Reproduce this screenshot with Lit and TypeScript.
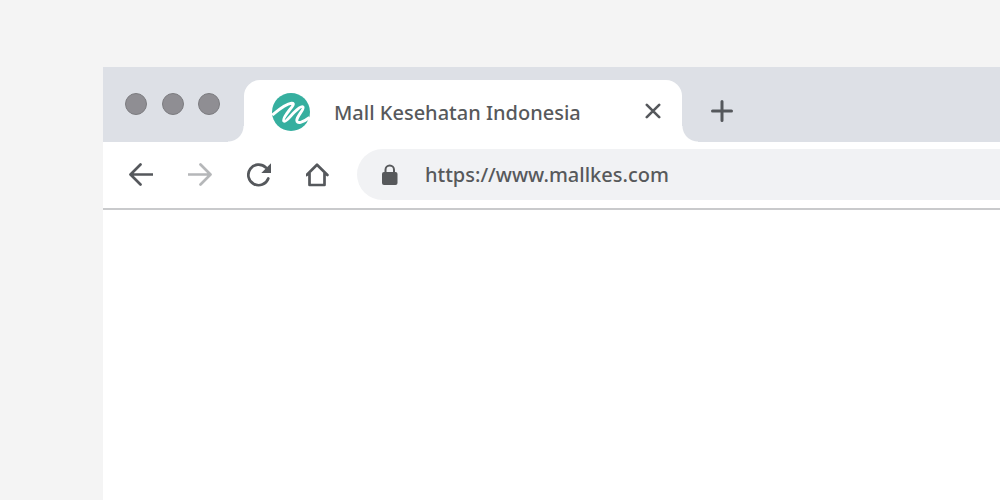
import { LitElement, html, css, svg } from "lit";
import { customElement, property } from "lit/decorators.js";

const glyphs = {
  back: svg`<path d="M23.5 11.500H2M11.500 1.500L1.500 11.500L11.500 21.500" />`,
  forward: svg`<path d="M.5 11.500H22M12.500 1.500L22.500 11.500L12.500 21.500" />`,
  reload: svg`<path d="M21.300 15.500A10.300 10.300 0 1 1 18.800 4.500" /><path class="solid" d="M24 .3V10H14.300Z" />`,
  home: svg`<path d="M.6 12L11 1.800L21.400 12M3.500 10V22H18.500V10" />`,
};

@customElement("app-root")
export class AppRoot extends LitElement {
  @property() pageTitle = "Mall Kesehatan Indonesia";
  @property() address = "https://www.mallkes.com";

  static styles = css`
    :host {
      display: flex;
      box-sizing: border-box;
      min-height: 100vh;
      padding: 67px 0 0 103px;
      background: #f4f4f4;
      color: #57595b;
      font-family: "Noto Sans", "Open Sans", sans-serif;
      font-size: 20px;
      font-weight: 500;
      overflow: hidden;
    }
    * {
      box-sizing: border-box;
    }
    button {
      display: flex;
      flex: none;
      padding: 0;
      border: 0;
      background: none;
      color: #55585c;
    }
    button:disabled {
      color: #b5b7b9;
    }
    svg {
      display: block;
      flex: none;
      fill: none;
      stroke: currentColor;
      stroke-width: 3;
      stroke-linecap: round;
      stroke-linejoin: round;
    }
    .toolbar svg {
      stroke-width: 2.7;
    }
    .solid {
      fill: currentColor;
      stroke: none;
    }
    .window {
      flex: 1;
      min-width: 0;
      background: #fff;
    }
    .strip {
      display: flex;
      align-items: center;
      padding: 13px 0 0 22px;
      background: #dde0e6;
    }
    .lights {
      display: flex;
      justify-content: space-between;
      width: 95px;
      margin: 0 24px 14px 0;
    }
    .light {
      width: 22px;
      height: 22px;
      border: 1px solid #7c7c80;
      border-radius: 50%;
      background: #8f8e93;
    }
    .tab {
      position: relative;
      display: flex;
      align-items: center;
      width: 438px;
      height: 62px;
      padding: 2px 20px 0 28px;
      border-radius: 16px 16px 0 0;
      background: #fff;
    }
    .tab::before,
    .tab::after {
      content: "";
      position: absolute;
      bottom: 0;
      width: 16px;
      height: 16px;
    }
    .tab::before {
      right: 100%;
      background: radial-gradient(circle at 0 0, transparent 15px, #fff 16px);
    }
    .tab::after {
      left: 100%;
      background: radial-gradient(circle at 100% 0, transparent 15px, #fff 16px);
    }
    .title {
      flex: 1;
      margin-left: 24px;
      white-space: nowrap;
    }
    .add {
      margin-left: 28px;
    }
    .toolbar {
      display: flex;
      align-items: center;
      padding: 7px 0 8px 26px;
      border-bottom: 2px solid #c9cacc;
    }
    .nav {
      display: flex;
      gap: 35px;
      margin-right: 27px;
    }
    .omnibox {
      display: flex;
      flex: 1;
      align-items: center;
      min-width: 0;
      height: 51px;
      padding-left: 25px;
      border-radius: 26px 0 0 26px;
      background: #f1f2f4;
    }
    .url {
      flex: 1;
      min-width: 0;
      margin-left: 27px;
      padding: 0;
      border: 0;
      outline: 0;
      background: none;
      color: inherit;
      font: inherit;
    }
  `;

  private navButton(name: keyof typeof glyphs, label: string, disabled = false) {
    return html`<button aria-label=${label} ?disabled=${disabled}>
      <svg width="24" height="24" viewBox="0 0 24 24">${glyphs[name]}</svg>
    </button>`;
  }

  render() {
    return html`
      <div class="window">
        <header class="strip">
          <div class="lights">
            <span class="light"></span><span class="light"></span><span class="light"></span>
          </div>
          <div class="tab">
            <svg width="38" height="38" viewBox="0 0 38 38">
              <circle cx="19" cy="19" r="19" fill="#36af9f" stroke="none" />
              <path
                stroke="#fff"
                stroke-width="2.9"
                stroke-linecap="butt"
                d="M.3 22C7 16.500 13 11 19.500 10.200C23.500 9.800 20 14 17.500 17C14 21.500 10.500 26.500 11.800 28C13.500 29.500 18 23.500 22 19.500C25 16.500 29.500 12.500 31 14C32.500 16 25.500 22.500 24.800 27C24.500 31.500 31 29.500 37.500 24.500"
              />
            </svg>
            <span class="title">${this.pageTitle}</span>
            <button aria-label="Close tab">
              <svg width="18" height="18" viewBox="0 0 18 18">
                <path stroke-width="2.6" d="M2.800 1.800L15.200 14.200M15.200 1.800L2.800 14.200" />
              </svg>
            </button>
          </div>
          <button class="add" aria-label="New tab">
            <svg width="24" height="24" viewBox="0 0 24 24"><path d="M12 2.500V21.500M2.500 12H21.500" /></svg>
          </button>
        </header>
        <div class="toolbar">
          <nav class="nav">
            ${this.navButton("back", "Back")} ${this.navButton("forward", "Forward", true)}
            ${this.navButton("reload", "Reload")} ${this.navButton("home", "Home")}
          </nav>
          <div class="omnibox">
            <svg width="16" height="22" viewBox="0 0 16 22">
              <rect class="solid" x="0" y="8" width="15.500" height="13" rx="2" />
              <path stroke-width="2" d="M3.500 9V5.800A4.200 4.200 0 0 1 12 5.800V9" />
            </svg>
            <input class="url" aria-label="Address" .value=${this.address} />
          </div>
        </div>
      </div>
    `;
  }
}
